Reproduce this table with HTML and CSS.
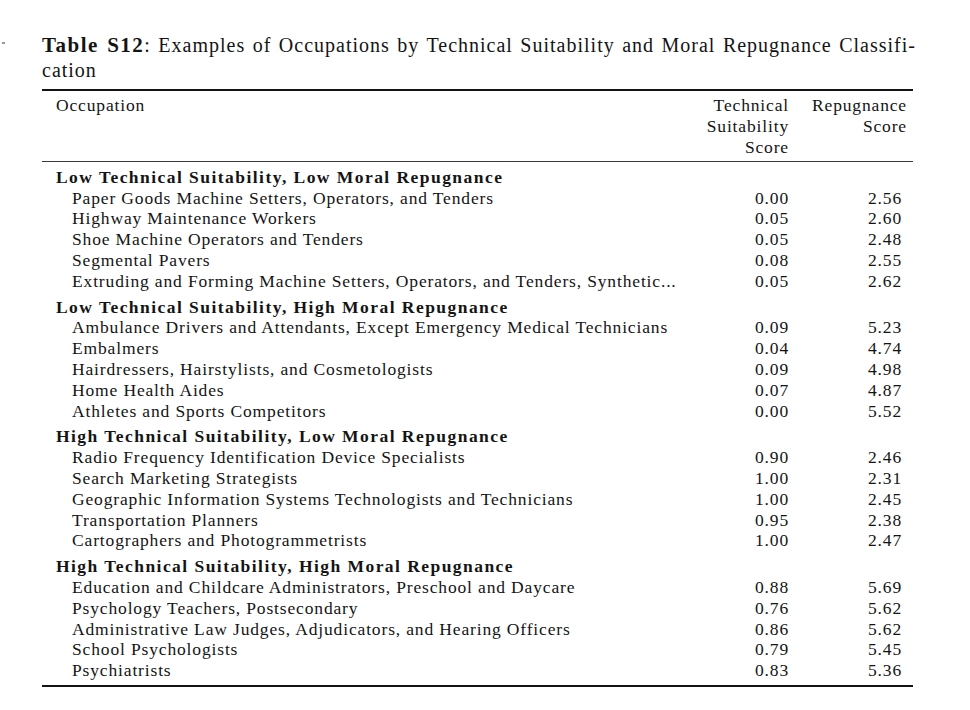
FILE: index.html
```html
<!DOCTYPE html>
<html lang="en">
<head>
<meta charset="utf-8">
<title>Table S12</title>
<link rel="stylesheet" href="styles.css">
</head>
<body>
<div class="page">
  <span class="mark"></span>
  <div class="doc">
    <p class="caption"><span class="cap-line"><b>Table S12</b>: Examples of Occupations by Technical Suitability and Moral Repugnance Classifi-</span>cation</p>
    <table class="tbl">
      <thead>
        <tr>
          <th class="c-occ">Occupation</th>
          <th class="c-tech">Technical<br>Suitability<br>Score</th>
          <th class="c-rep">Repugnance<br>Score</th>
        </tr>
      </thead>
      <tbody>
        <tr class="grp first"><td colspan="3">Low Technical Suitability, Low Moral Repugnance</td></tr>
        <tr><td class="occ">Paper Goods Machine Setters, Operators, and Tenders</td><td class="num">0.00</td><td class="num rep">2.56</td></tr>
        <tr><td class="occ">Highway Maintenance Workers</td><td class="num">0.05</td><td class="num rep">2.60</td></tr>
        <tr><td class="occ">Shoe Machine Operators and Tenders</td><td class="num">0.05</td><td class="num rep">2.48</td></tr>
        <tr><td class="occ">Segmental Pavers</td><td class="num">0.08</td><td class="num rep">2.55</td></tr>
        <tr><td class="occ">Extruding and Forming Machine Setters, Operators, and Tenders, Synthetic...</td><td class="num">0.05</td><td class="num rep">2.62</td></tr>

        <tr class="grp"><td colspan="3">Low Technical Suitability, High Moral Repugnance</td></tr>
        <tr><td class="occ">Ambulance Drivers and Attendants, Except Emergency Medical Technicians</td><td class="num">0.09</td><td class="num rep">5.23</td></tr>
        <tr><td class="occ">Embalmers</td><td class="num">0.04</td><td class="num rep">4.74</td></tr>
        <tr><td class="occ">Hairdressers, Hairstylists, and Cosmetologists</td><td class="num">0.09</td><td class="num rep">4.98</td></tr>
        <tr><td class="occ">Home Health Aides</td><td class="num">0.07</td><td class="num rep">4.87</td></tr>
        <tr><td class="occ">Athletes and Sports Competitors</td><td class="num">0.00</td><td class="num rep">5.52</td></tr>

        <tr class="grp"><td colspan="3">High Technical Suitability, Low Moral Repugnance</td></tr>
        <tr><td class="occ">Radio Frequency Identification Device Specialists</td><td class="num">0.90</td><td class="num rep">2.46</td></tr>
        <tr><td class="occ">Search Marketing Strategists</td><td class="num">1.00</td><td class="num rep">2.31</td></tr>
        <tr><td class="occ">Geographic Information Systems Technologists and Technicians</td><td class="num">1.00</td><td class="num rep">2.45</td></tr>
        <tr><td class="occ">Transportation Planners</td><td class="num">0.95</td><td class="num rep">2.38</td></tr>
        <tr><td class="occ">Cartographers and Photogrammetrists</td><td class="num">1.00</td><td class="num rep">2.47</td></tr>

        <tr class="grp"><td colspan="3">High Technical Suitability, High Moral Repugnance</td></tr>
        <tr><td class="occ">Education and Childcare Administrators, Preschool and Daycare</td><td class="num">0.88</td><td class="num rep">5.69</td></tr>
        <tr><td class="occ">Psychology Teachers, Postsecondary</td><td class="num">0.76</td><td class="num rep">5.62</td></tr>
        <tr><td class="occ">Administrative Law Judges, Adjudicators, and Hearing Officers</td><td class="num">0.86</td><td class="num rep">5.62</td></tr>
        <tr><td class="occ">School Psychologists</td><td class="num">0.79</td><td class="num rep">5.45</td></tr>
        <tr class="last"><td class="occ">Psychiatrists</td><td class="num">0.83</td><td class="num rep">5.36</td></tr>
      </tbody>
    </table>
  </div>
</div>
</body>
</html>
```
FILE: styles.css
```css
html, body {
  margin: 0;
  padding: 0;
  background: #ffffff;
}

body {
  font-family: "Liberation Serif", "Times New Roman", serif;
  color: #141414;
}

.page {
  display: flex;
  align-items: flex-start;
  padding-top: 33px;
}

.mark {
  display: block;
  width: 3px;
  height: 2px;
  margin: 9px 0 0 2px;
  background: #9a9a9a;
  flex: none;
}

.doc {
  margin-left: 37px;
  width: 874px;
}

.caption {
  margin: 0 0 7px 0;
  font-size: 20px;
  line-height: 24.5px;
  letter-spacing: 1px;
}

.cap-line {
  display: block;
  text-align: justify;
  text-align-last: justify;
}

.caption b {
  font-weight: bold;
  font-size: 21px;
  line-height: 24.5px;
  letter-spacing: 1.5px;
}

.tbl {
  border-collapse: collapse;
  width: 871px;
  font-size: 17.5px;
  letter-spacing: 0.85px;
}

.tbl th,
.tbl td {
  padding: 0;
  line-height: 20.8px;
  font-weight: normal;
  white-space: nowrap;
}

.tbl thead th {
  border-top: 2px solid #141414;
  border-bottom: 1px solid #3a3a3a;
  padding-top: 4px;
  padding-bottom: 4px;
  vertical-align: top;
}

.c-occ {
  text-align: left;
  padding-left: 14px !important;
}

.c-tech {
  text-align: right;
  width: 100px;
  padding-right: 3px !important;
}

.c-rep {
  text-align: right;
  width: 115px;
  padding-right: 6px !important;
}

.grp td {
  font-weight: bold;
  letter-spacing: 1.45px;
  padding-left: 14px;
  padding-top: 5px;
}

.grp.first td {
  padding-top: 4.5px;
}

.occ {
  padding-left: 30px !important;
}

.num {
  text-align: right;
  padding-right: 3px !important;
}

.num.rep {
  padding-right: 11px !important;
}

.last td {
  border-bottom: 2px solid #141414;
  padding-bottom: 4px;
}
```
